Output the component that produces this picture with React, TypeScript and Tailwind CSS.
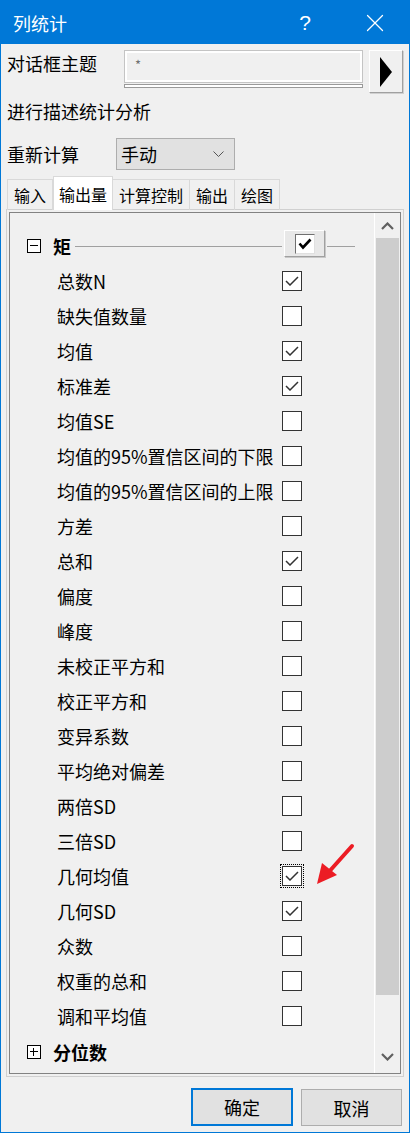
import { X } from 'lucide-react';

const items: [string, boolean][] = [
  ['总数N', true],
  ['缺失值数量', false],
  ['均值', true],
  ['标准差', true],
  ['均值SE', false],
  ['均值的95%置信区间的下限', false],
  ['均值的95%置信区间的上限', false],
  ['方差', false],
  ['总和', true],
  ['偏度', false],
  ['峰度', false],
  ['未校正平方和', false],
  ['校正平方和', false],
  ['变异系数', false],
  ['平均绝对偏差', false],
  ['两倍SD', false],
  ['三倍SD', false],
  ['几何均值', true],
  ['几何SD', true],
  ['众数', false],
  ['权重的总和', false],
  ['调和平均值', false],
];

const tabs = ['输入', '输出量', '计算控制', '输出', '绘图'];

const CheckBox = ({ checked, focused }: { checked: boolean; focused?: boolean }) => (
  <div className={focused ? 'outline outline-1 outline-dotted outline-black outline-offset-[1px]' : ''}>
    <div className="w-[20px] h-[20px] bg-white border border-[#333333] flex items-center justify-center">
      {checked && (
        <svg width="14" height="10" viewBox="0 0 14 10">
          <polyline points="1,5 5,9 13,1" fill="none" stroke="#333333" strokeWidth="1.5" />
        </svg>
      )}
    </div>
  </div>
);

const TreeBox = ({ open }: { open: boolean }) => (
  <div className="w-[14px] h-[14px] border border-black relative bg-white">
    <div className="absolute left-[2px] right-[2px] top-[5px] h-px bg-black" />
    {!open && <div className="absolute top-[2px] bottom-[2px] left-[5px] w-px bg-black" />}
  </div>
);

export default function App() {
  return (
    <div className="w-[410px] h-[1133px] border border-[#0078d7] bg-[#f0f0f0] flex flex-col relative font-['Noto_Sans_CJK_SC','Noto_Sans',sans-serif] text-black overflow-hidden">
      {/* Title bar */}
      <div className="h-[43px] bg-[#0078d7] flex items-center text-white shrink-0">
        <span className="pl-[12px] text-[18px] leading-none flex-1">列统计</span>
        <span className="text-[21px] leading-none w-[20px] text-center mr-[45px] font-['Liberation_Sans',sans-serif] font-light">?</span>
        <X className="w-[30px] h-[30px] mr-[19px]" strokeWidth={1} />
      </div>

      {/* Dialog theme row */}
      <div className="mt-[6px] h-[44px] flex items-start pl-[6px] shrink-0">
        <div className="w-[117px] h-[25px] flex items-center text-[18px] leading-none">对话框主题</div>
        <div className="w-[239px] flex flex-col">
          <div className="h-[33px] border border-[#c4c4c4] shadow-[inset_0_0_0_2px_#ffffff] bg-[#f0f0f0] flex items-start pl-[10px] pt-[7px] text-[13px] leading-none text-[#707070]">*</div>
          <div className="h-[4px] mt-px border border-[#9a9a9a] bg-white" />
        </div>
        <div className="ml-[6px] w-[34px] h-[43px] bg-[#f0f0f0] border border-t-white border-l-white border-r-[#a0a0a0] border-b-[#a0a0a0] shadow-[1px_1px_0_#d0d0d0] flex items-center justify-center">
          <svg width="12" height="30" viewBox="0 0 12 30">
            <polygon points="0,0 12,15 0,30" fill="#000000" />
          </svg>
        </div>
      </div>

      <div className="h-[34px] flex items-center pl-[6px] text-[18px] leading-none shrink-0">进行描述统计分析</div>

      {/* Recalculate row */}
      <div className="mt-[10px] h-[32px] flex items-center pl-[6px] shrink-0">
        <div className="w-[109px] text-[18px] leading-none">重新计算</div>
        <div className="w-[119px] h-[32px] bg-[#e1e1e1] border border-[#adadad] flex items-center pl-[4px] pr-[10px]">
          <span className="flex-1 text-[18px] leading-none">手动</span>
          <svg width="11" height="7" viewBox="0 0 11 7">
            <polyline points="0.5,0.5 5.5,5.5 10.5,0.5" fill="none" stroke="#555555" strokeWidth="1" />
          </svg>
        </div>
      </div>

      {/* Tabs */}
      <div className="mt-[6px] h-[34px] flex items-end pl-[6px] relative z-10 shrink-0">
        {tabs.map((t, i) =>
          i === 1 ? (
            <div key={t} className="h-[34px] bg-white border border-[#d9d9d9] border-b-0 px-[5px] flex items-center text-[16px] leading-none">
              {t}
            </div>
          ) : (
            <div key={t} className={`h-[31px] border-t border-r border-[#d9d9d9] ${i === 0 ? 'border-l' : ''} px-[6px] flex items-center text-[16px] leading-none`}>
              {t}
            </div>
          )
        )}
      </div>

      {/* Panel */}
      <div className="-mt-px mx-[5px] h-[868px] border border-[#d0d0d0] p-[2px] shrink-0">
        <div className="h-full border border-[#828282] flex">
          <div className="flex-1 pt-[16px]">
            {/* Group header */}
            <div className="h-[34px] flex items-center pl-[17px]">
              <TreeBox open />
              <span className="ml-[12px] text-[18px] leading-none font-bold">矩</span>
              <div className="flex-1 h-px bg-[#a0a0a0] ml-[4px] mr-[2px]" />
              <div className="self-start mt-px w-[41px] h-[27px] bg-[#e8e8e8] border border-t-white border-l-white border-r-[#a0a0a0] border-b-[#a0a0a0] shadow-[1px_1px_0_#c8c8c8] flex items-center justify-center">
                <div className="w-[20px] h-[20px] bg-white border border-t-[#707070] border-l-[#707070] border-r-[#e0e0e0] border-b-[#e0e0e0] flex items-center justify-center">
                  <svg width="14" height="12" viewBox="0 0 14 12">
                    <polyline points="1.5,5.5 5,9.5 12.5,1.5" fill="none" stroke="#000000" strokeWidth="2.6" />
                  </svg>
                </div>
              </div>
              <div className="w-[28px] h-px bg-[#a0a0a0] ml-[2px] mr-[19px]" />
            </div>

            {/* Items */}
            <div>
              {items.map(([label, checked]) => (
                <div key={label} className="h-[35px] flex items-center pl-[47px]">
                  <span className="w-[225px] text-[18px] leading-none whitespace-nowrap">{label}</span>
                  <CheckBox checked={checked} focused={label === '几何均值'} />
                </div>
              ))}
            </div>

            <div className="mt-[1px] h-[36px] flex items-center pl-[17px]">
              <TreeBox open={false} />
              <span className="ml-[12px] text-[18px] leading-none font-bold">分位数</span>
            </div>
          </div>

          {/* Scrollbar */}
          <div className="w-[26px] border-l border-white bg-[#f0f0f0] flex flex-col">
            <div className="h-[25px] flex items-center justify-center">
              <svg width="13" height="8" viewBox="0 0 13 8">
                <polyline points="1,7 6.5,1.5 12,7" fill="none" stroke="#606060" strokeWidth="2.2" />
              </svg>
            </div>
            <div className="mx-px h-[757px] bg-[#cdcdcd]" />
            <div className="flex-1 flex items-end justify-center pb-[12px]">
              <svg width="13" height="8" viewBox="0 0 13 8">
                <polyline points="1,1 6.5,6.5 12,1" fill="none" stroke="#606060" strokeWidth="2.2" />
              </svg>
            </div>
          </div>
        </div>
      </div>

      {/* Buttons */}
      <div className="mt-[11px] flex justify-end pr-[7px] gap-[8px] shrink-0">
        <button className="w-[102px] h-[38px] bg-[#e1e1e1] border-2 border-[#0078d7] text-[18px] leading-none">确定</button>
        <button className="w-[101px] h-[37px] mt-px bg-[#e1e1e1] border border-[#adadad] text-[18px] leading-none">取消</button>
      </div>

      {/* Red annotation arrow */}
      <svg className="absolute left-[300px] top-[835px]" width="60" height="60" viewBox="0 0 60 60">
        <line x1="51" y1="10" x2="26" y2="38" stroke="#ec1c24" strokeWidth="4" strokeLinecap="round" />
        <polygon points="16,48 21,27 36,39" fill="#ec1c24" />
      </svg>
    </div>
  );
}
